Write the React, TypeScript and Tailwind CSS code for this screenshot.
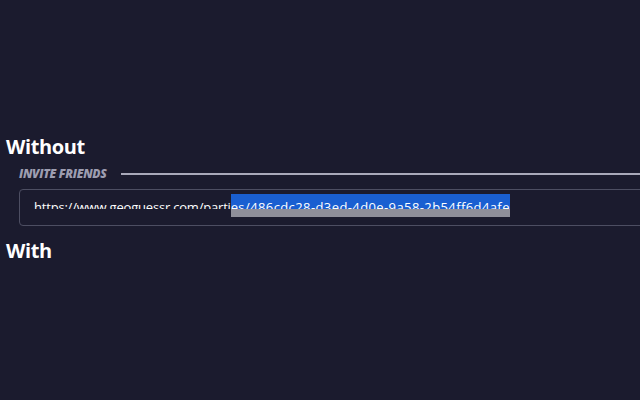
import React from "react";

export default function App() {
  return (
    <div className="w-[640px] h-[400px] overflow-hidden bg-[#1b1b2e] font-['Open_Sans',sans-serif]">
      <div className="pt-[133px] pl-[6px]">
        <h2 className="text-[20px] leading-[28px] font-bold tracking-[-0.4px] text-white">Without</h2>
        <div className="ml-[13px] mt-[6px] flex items-center gap-[14px] h-[14px]">
          <span className="italic font-extrabold uppercase text-[12px] tracking-[-0.3px] text-[#9d9db0] leading-none">
            Invite friends
          </span>
          <div className="flex-1 h-[2px] bg-[#a9a9ba]" />
        </div>
        <div className="ml-[13px] mt-[8px] w-[640px] h-[37px] border border-[#4d4e62] rounded-[4px] pl-[14px] pt-[4px]">
          <div className="flex items-start text-[13px] text-white">
            <div className="h-[15px] overflow-hidden">
              <div className="pt-[6px] leading-[15px] whitespace-nowrap tracking-[-0.2px]">https://www.geoguessr.com/parti</div>
            </div>
            <div className="flex flex-col">
              <div className="h-[15px] overflow-hidden bg-[#1a5fd1]">
                <div className="pt-[6px] leading-[15px] whitespace-nowrap tracking-[0.4px]">es/486cdc28-d3ed-4d0e-9a58-2b54ff6d4afe</div>
              </div>
              <div className="h-[8px] bg-[#8e8e99]" />
            </div>
          </div>
        </div>
        <h2 className="mt-[11px] text-[20px] leading-[28px] font-bold tracking-[-0.4px] text-white">With</h2>
      </div>
    </div>
  );
}
